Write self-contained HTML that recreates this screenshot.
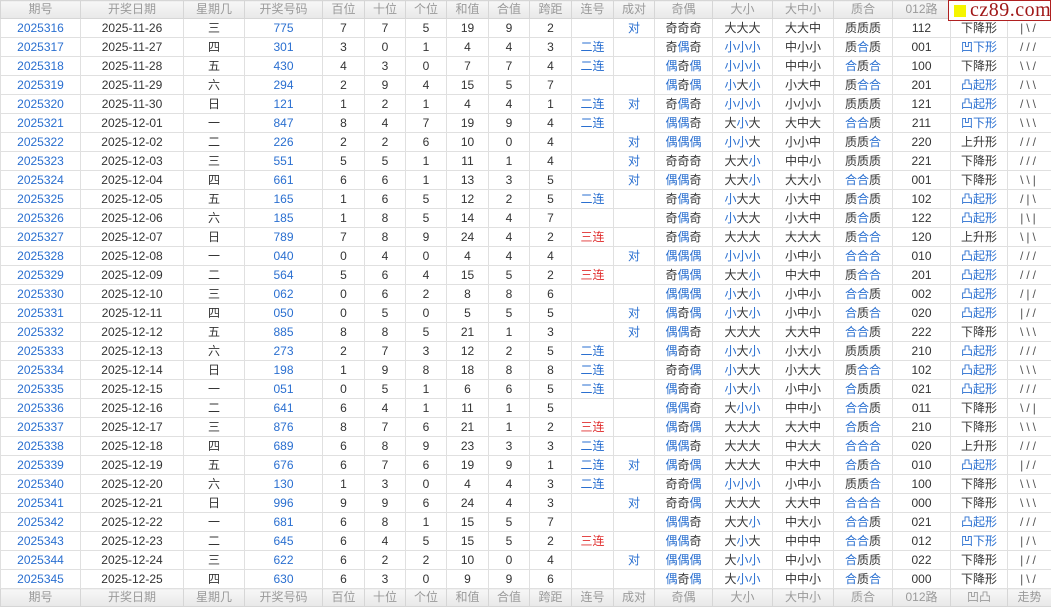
<!DOCTYPE html>
<html><head><meta charset="utf-8"><style>
*{margin:0;padding:0;box-sizing:border-box}
body{width:1051px;height:606px;overflow:hidden;background:#fff;font-family:"Liberation Sans","Noto Sans CJK SC",sans-serif;font-size:12px;color:#333;position:relative}
table{border-collapse:collapse;table-layout:fixed;width:1051px}
td,th{border:1px solid #e0e0e0;text-align:center;height:19px;line-height:17px;white-space:nowrap;overflow:hidden;font-weight:normal}
th{background:linear-gradient(#f7f7f7,#e8e8e8);color:#9a9a9a;height:18px;border-color:#d6d6d6}
td:first-child,td:nth-child(4),.b,i{color:#2a6fd0}
td:last-child{letter-spacing:3px;color:#555}
i{font-style:normal}
.r{color:#e03030}
#logo{position:absolute;left:948px;top:0;width:103px;height:21px;background:#fff;border:1px solid #b02020;font-family:"Liberation Serif",serif;font-size:20px;line-height:19px;color:#a01818;padding-left:21px;letter-spacing:0.5px}
#logo:before{content:"";position:absolute;left:5px;top:4px;width:12px;height:12px;background:#f5f500}
</style></head><body>
<table>
<colgroup><col style="width:80px"><col style="width:103px"><col style="width:61px"><col style="width:78px"><col style="width:42px"><col style="width:41px"><col style="width:41px"><col style="width:42px"><col style="width:41px"><col style="width:42px"><col style="width:42px"><col style="width:41px"><col style="width:58px"><col style="width:60px"><col style="width:61px"><col style="width:59px"><col style="width:58px"><col style="width:57px"><col style="width:44px"></colgroup>
<tr><th>期号</th><th>开奖日期</th><th>星期几</th><th>开奖号码</th><th>百位</th><th>十位</th><th>个位</th><th>和值</th><th>合值</th><th>跨距</th><th>连号</th><th>成对</th><th>奇偶</th><th>大小</th><th>大中小</th><th>质合</th><th>012路</th><th>凹凸</th><th>走势</th></tr>
<tr><td>2025316</td><td>2025-11-26</td><td>三</td><td>775</td><td>7</td><td>7</td><td>5</td><td>19</td><td>9</td><td>2</td><td></td><td class="b">对</td><td>奇奇奇</td><td>大大大</td><td>大大中</td><td>质质质</td><td>112</td><td>下降形</td><td>|\/</td></tr>
<tr><td>2025317</td><td>2025-11-27</td><td>四</td><td>301</td><td>3</td><td>0</td><td>1</td><td>4</td><td>4</td><td>3</td><td class="b">二连</td><td></td><td>奇<i>偶</i>奇</td><td><i>小小小</i></td><td>中小小</td><td>质<i>合</i>质</td><td>001</td><td class="b">凹下形</td><td>///</td></tr>
<tr><td>2025318</td><td>2025-11-28</td><td>五</td><td>430</td><td>4</td><td>3</td><td>0</td><td>7</td><td>7</td><td>4</td><td class="b">二连</td><td></td><td><i>偶</i>奇<i>偶</i></td><td><i>小小小</i></td><td>中中小</td><td><i>合</i>质<i>合</i></td><td>100</td><td>下降形</td><td>\\/</td></tr>
<tr><td>2025319</td><td>2025-11-29</td><td>六</td><td>294</td><td>2</td><td>9</td><td>4</td><td>15</td><td>5</td><td>7</td><td></td><td></td><td><i>偶</i>奇<i>偶</i></td><td><i>小</i>大<i>小</i></td><td>小大中</td><td>质<i>合合</i></td><td>201</td><td class="b">凸起形</td><td>/\\</td></tr>
<tr><td>2025320</td><td>2025-11-30</td><td>日</td><td>121</td><td>1</td><td>2</td><td>1</td><td>4</td><td>4</td><td>1</td><td class="b">二连</td><td class="b">对</td><td>奇<i>偶</i>奇</td><td><i>小小小</i></td><td>小小小</td><td>质质质</td><td>121</td><td class="b">凸起形</td><td>/\\</td></tr>
<tr><td>2025321</td><td>2025-12-01</td><td>一</td><td>847</td><td>8</td><td>4</td><td>7</td><td>19</td><td>9</td><td>4</td><td class="b">二连</td><td></td><td><i>偶偶</i>奇</td><td>大<i>小</i>大</td><td>大中大</td><td><i>合合</i>质</td><td>211</td><td class="b">凹下形</td><td>\\\</td></tr>
<tr><td>2025322</td><td>2025-12-02</td><td>二</td><td>226</td><td>2</td><td>2</td><td>6</td><td>10</td><td>0</td><td>4</td><td></td><td class="b">对</td><td><i>偶偶偶</i></td><td><i>小小</i>大</td><td>小小中</td><td>质质<i>合</i></td><td>220</td><td>上升形</td><td>///</td></tr>
<tr><td>2025323</td><td>2025-12-03</td><td>三</td><td>551</td><td>5</td><td>5</td><td>1</td><td>11</td><td>1</td><td>4</td><td></td><td class="b">对</td><td>奇奇奇</td><td>大大<i>小</i></td><td>中中小</td><td>质质质</td><td>221</td><td>下降形</td><td>///</td></tr>
<tr><td>2025324</td><td>2025-12-04</td><td>四</td><td>661</td><td>6</td><td>6</td><td>1</td><td>13</td><td>3</td><td>5</td><td></td><td class="b">对</td><td><i>偶偶</i>奇</td><td>大大<i>小</i></td><td>大大小</td><td><i>合合</i>质</td><td>001</td><td>下降形</td><td>\\|</td></tr>
<tr><td>2025325</td><td>2025-12-05</td><td>五</td><td>165</td><td>1</td><td>6</td><td>5</td><td>12</td><td>2</td><td>5</td><td class="b">二连</td><td></td><td>奇<i>偶</i>奇</td><td><i>小</i>大大</td><td>小大中</td><td>质<i>合</i>质</td><td>102</td><td class="b">凸起形</td><td>/|\</td></tr>
<tr><td>2025326</td><td>2025-12-06</td><td>六</td><td>185</td><td>1</td><td>8</td><td>5</td><td>14</td><td>4</td><td>7</td><td></td><td></td><td>奇<i>偶</i>奇</td><td><i>小</i>大大</td><td>小大中</td><td>质<i>合</i>质</td><td>122</td><td class="b">凸起形</td><td>|\|</td></tr>
<tr><td>2025327</td><td>2025-12-07</td><td>日</td><td>789</td><td>7</td><td>8</td><td>9</td><td>24</td><td>4</td><td>2</td><td class="r">三连</td><td></td><td>奇<i>偶</i>奇</td><td>大大大</td><td>大大大</td><td>质<i>合合</i></td><td>120</td><td>上升形</td><td>\|\</td></tr>
<tr><td>2025328</td><td>2025-12-08</td><td>一</td><td>040</td><td>0</td><td>4</td><td>0</td><td>4</td><td>4</td><td>4</td><td></td><td class="b">对</td><td><i>偶偶偶</i></td><td><i>小小小</i></td><td>小中小</td><td><i>合合合</i></td><td>010</td><td class="b">凸起形</td><td>///</td></tr>
<tr><td>2025329</td><td>2025-12-09</td><td>二</td><td>564</td><td>5</td><td>6</td><td>4</td><td>15</td><td>5</td><td>2</td><td class="r">三连</td><td></td><td>奇<i>偶偶</i></td><td>大大<i>小</i></td><td>中大中</td><td>质<i>合合</i></td><td>201</td><td class="b">凸起形</td><td>///</td></tr>
<tr><td>2025330</td><td>2025-12-10</td><td>三</td><td>062</td><td>0</td><td>6</td><td>2</td><td>8</td><td>8</td><td>6</td><td></td><td></td><td><i>偶偶偶</i></td><td><i>小</i>大<i>小</i></td><td>小中小</td><td><i>合合</i>质</td><td>002</td><td class="b">凸起形</td><td>/|/</td></tr>
<tr><td>2025331</td><td>2025-12-11</td><td>四</td><td>050</td><td>0</td><td>5</td><td>0</td><td>5</td><td>5</td><td>5</td><td></td><td class="b">对</td><td><i>偶</i>奇<i>偶</i></td><td><i>小</i>大<i>小</i></td><td>小中小</td><td><i>合</i>质<i>合</i></td><td>020</td><td class="b">凸起形</td><td>|//</td></tr>
<tr><td>2025332</td><td>2025-12-12</td><td>五</td><td>885</td><td>8</td><td>8</td><td>5</td><td>21</td><td>1</td><td>3</td><td></td><td class="b">对</td><td><i>偶偶</i>奇</td><td>大大大</td><td>大大中</td><td><i>合合</i>质</td><td>222</td><td>下降形</td><td>\\\</td></tr>
<tr><td>2025333</td><td>2025-12-13</td><td>六</td><td>273</td><td>2</td><td>7</td><td>3</td><td>12</td><td>2</td><td>5</td><td class="b">二连</td><td></td><td><i>偶</i>奇奇</td><td><i>小</i>大<i>小</i></td><td>小大小</td><td>质质质</td><td>210</td><td class="b">凸起形</td><td>///</td></tr>
<tr><td>2025334</td><td>2025-12-14</td><td>日</td><td>198</td><td>1</td><td>9</td><td>8</td><td>18</td><td>8</td><td>8</td><td class="b">二连</td><td></td><td>奇奇<i>偶</i></td><td><i>小</i>大大</td><td>小大大</td><td>质<i>合合</i></td><td>102</td><td class="b">凸起形</td><td>\\\</td></tr>
<tr><td>2025335</td><td>2025-12-15</td><td>一</td><td>051</td><td>0</td><td>5</td><td>1</td><td>6</td><td>6</td><td>5</td><td class="b">二连</td><td></td><td><i>偶</i>奇奇</td><td><i>小</i>大<i>小</i></td><td>小中小</td><td><i>合</i>质质</td><td>021</td><td class="b">凸起形</td><td>///</td></tr>
<tr><td>2025336</td><td>2025-12-16</td><td>二</td><td>641</td><td>6</td><td>4</td><td>1</td><td>11</td><td>1</td><td>5</td><td></td><td></td><td><i>偶偶</i>奇</td><td>大<i>小小</i></td><td>中中小</td><td><i>合合</i>质</td><td>011</td><td>下降形</td><td>\/|</td></tr>
<tr><td>2025337</td><td>2025-12-17</td><td>三</td><td>876</td><td>8</td><td>7</td><td>6</td><td>21</td><td>1</td><td>2</td><td class="r">三连</td><td></td><td><i>偶</i>奇<i>偶</i></td><td>大大大</td><td>大大中</td><td><i>合</i>质<i>合</i></td><td>210</td><td>下降形</td><td>\\\</td></tr>
<tr><td>2025338</td><td>2025-12-18</td><td>四</td><td>689</td><td>6</td><td>8</td><td>9</td><td>23</td><td>3</td><td>3</td><td class="b">二连</td><td></td><td><i>偶偶</i>奇</td><td>大大大</td><td>中大大</td><td><i>合合合</i></td><td>020</td><td>上升形</td><td>///</td></tr>
<tr><td>2025339</td><td>2025-12-19</td><td>五</td><td>676</td><td>6</td><td>7</td><td>6</td><td>19</td><td>9</td><td>1</td><td class="b">二连</td><td class="b">对</td><td><i>偶</i>奇<i>偶</i></td><td>大大大</td><td>中大中</td><td><i>合</i>质<i>合</i></td><td>010</td><td class="b">凸起形</td><td>|//</td></tr>
<tr><td>2025340</td><td>2025-12-20</td><td>六</td><td>130</td><td>1</td><td>3</td><td>0</td><td>4</td><td>4</td><td>3</td><td class="b">二连</td><td></td><td>奇奇<i>偶</i></td><td><i>小小小</i></td><td>小中小</td><td>质质<i>合</i></td><td>100</td><td>下降形</td><td>\\\</td></tr>
<tr><td>2025341</td><td>2025-12-21</td><td>日</td><td>996</td><td>9</td><td>9</td><td>6</td><td>24</td><td>4</td><td>3</td><td></td><td class="b">对</td><td>奇奇<i>偶</i></td><td>大大大</td><td>大大中</td><td><i>合合合</i></td><td>000</td><td>下降形</td><td>\\\</td></tr>
<tr><td>2025342</td><td>2025-12-22</td><td>一</td><td>681</td><td>6</td><td>8</td><td>1</td><td>15</td><td>5</td><td>7</td><td></td><td></td><td><i>偶偶</i>奇</td><td>大大<i>小</i></td><td>中大小</td><td><i>合合</i>质</td><td>021</td><td class="b">凸起形</td><td>///</td></tr>
<tr><td>2025343</td><td>2025-12-23</td><td>二</td><td>645</td><td>6</td><td>4</td><td>5</td><td>15</td><td>5</td><td>2</td><td class="r">三连</td><td></td><td><i>偶偶</i>奇</td><td>大<i>小</i>大</td><td>中中中</td><td><i>合合</i>质</td><td>012</td><td class="b">凹下形</td><td>|/\</td></tr>
<tr><td>2025344</td><td>2025-12-24</td><td>三</td><td>622</td><td>6</td><td>2</td><td>2</td><td>10</td><td>0</td><td>4</td><td></td><td class="b">对</td><td><i>偶偶偶</i></td><td>大<i>小小</i></td><td>中小小</td><td><i>合</i>质质</td><td>022</td><td>下降形</td><td>|//</td></tr>
<tr><td>2025345</td><td>2025-12-25</td><td>四</td><td>630</td><td>6</td><td>3</td><td>0</td><td>9</td><td>9</td><td>6</td><td></td><td></td><td><i>偶</i>奇<i>偶</i></td><td>大<i>小小</i></td><td>中中小</td><td><i>合</i>质<i>合</i></td><td>000</td><td>下降形</td><td>|\/</td></tr>
<tr><th>期号</th><th>开奖日期</th><th>星期几</th><th>开奖号码</th><th>百位</th><th>十位</th><th>个位</th><th>和值</th><th>合值</th><th>跨距</th><th>连号</th><th>成对</th><th>奇偶</th><th>大小</th><th>大中小</th><th>质合</th><th>012路</th><th>凹凸</th><th>走势</th></tr>
</table>
<div id="logo">cz89.com</div>
</body></html>
